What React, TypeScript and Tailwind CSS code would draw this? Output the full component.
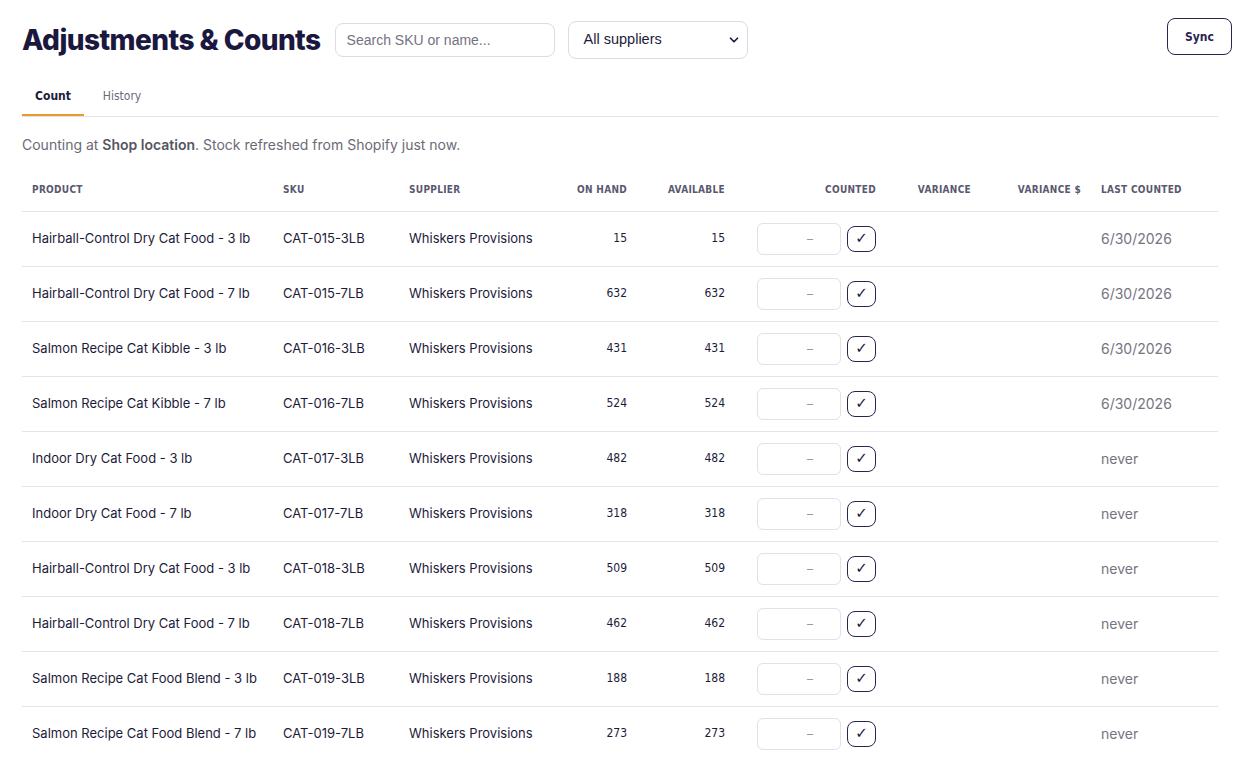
import { ChevronDown } from 'lucide-react';

type Row = {
  product: string;
  sku: string;
  supplier: string;
  onHand: number;
  available: number;
  lastCounted: string;
};

const rows: Row[] = [
  { product: 'Hairball-Control Dry Cat Food - 3 lb', sku: 'CAT-015-3LB', supplier: 'Whiskers Provisions', onHand: 15, available: 15, lastCounted: '6/30/2026' },
  { product: 'Hairball-Control Dry Cat Food - 7 lb', sku: 'CAT-015-7LB', supplier: 'Whiskers Provisions', onHand: 632, available: 632, lastCounted: '6/30/2026' },
  { product: 'Salmon Recipe Cat Kibble - 3 lb', sku: 'CAT-016-3LB', supplier: 'Whiskers Provisions', onHand: 431, available: 431, lastCounted: '6/30/2026' },
  { product: 'Salmon Recipe Cat Kibble - 7 lb', sku: 'CAT-016-7LB', supplier: 'Whiskers Provisions', onHand: 524, available: 524, lastCounted: '6/30/2026' },
  { product: 'Indoor Dry Cat Food - 3 lb', sku: 'CAT-017-3LB', supplier: 'Whiskers Provisions', onHand: 482, available: 482, lastCounted: 'never' },
  { product: 'Indoor Dry Cat Food - 7 lb', sku: 'CAT-017-7LB', supplier: 'Whiskers Provisions', onHand: 318, available: 318, lastCounted: 'never' },
  { product: 'Hairball-Control Dry Cat Food - 3 lb', sku: 'CAT-018-3LB', supplier: 'Whiskers Provisions', onHand: 509, available: 509, lastCounted: 'never' },
  { product: 'Hairball-Control Dry Cat Food - 7 lb', sku: 'CAT-018-7LB', supplier: 'Whiskers Provisions', onHand: 462, available: 462, lastCounted: 'never' },
  { product: 'Salmon Recipe Cat Food Blend - 3 lb', sku: 'CAT-019-3LB', supplier: 'Whiskers Provisions', onHand: 188, available: 188, lastCounted: 'never' },
  { product: 'Salmon Recipe Cat Food Blend - 7 lb', sku: 'CAT-019-7LB', supplier: 'Whiskers Provisions', onHand: 273, available: 273, lastCounted: 'never' },
];

const inter = "font-['Inter',sans-serif]";
const narrow = "font-['DejaVu_Sans_Condensed','Liberation_Sans_Narrow',sans-serif]";

const th = `${narrow} py-0 h-[43px] px-[10px] text-[10px] font-semibold uppercase tracking-[0.03em] text-[#5a5870]`;

export default function App() {
  return (
    <div className={`${inter} min-h-screen bg-white pl-[22px] pr-[20px] pt-[18px] text-[#1d1b3a]`}>
      <div className="mr-[-14px] flex items-start justify-between">
        <div className="flex items-center gap-[13px] pt-[2px]">
          <h1 className="text-[28px] font-extrabold leading-[40px] tracking-[-0.02em] text-[#1b1840]">
            Adjustments &amp; Counts
          </h1>
          <input
            placeholder="Search SKU or name..."
            className="ml-[1px] h-[34px] w-[220px] rounded-lg border border-[#dcdce2] px-[11px] font-['Liberation_Sans',sans-serif] text-[14px] placeholder:text-[#74727f] outline-none"
          />
          <div className="relative flex h-[38px] w-[180px] items-center rounded-lg border border-[#dcdce2] px-[15px] font-['Liberation_Sans',sans-serif] text-[14.5px] text-[#1d1b3a]">
            All suppliers
            <ChevronDown className="absolute right-[6px] h-[14px] w-[14px] stroke-[3]" />
          </div>
        </div>
        <button className={`${narrow} h-[37px] w-[65px] rounded-lg border border-[#2a2550] text-[12px] font-semibold text-[#2a2550]`}>
          Sync
        </button>
      </div>

      <div className="mt-[27px] flex border-b border-[#e4e4e8]">
        <div className={`${narrow} w-[62px] border-b-2 border-[#ec9a2a] pb-[9px] text-center text-[12px] font-semibold text-[#1d1b3a]`}>
          Count
        </div>
        <div className={`${narrow} w-[76px] pb-[9px] text-center text-[12px] text-[#6c6a7d]`}>
          History
        </div>
      </div>

      <p className="mt-[17px] text-[14px] text-[#6b6a75]">
        Counting at <span className="font-semibold text-[#56555f]">Shop location</span>. Stock refreshed from Shopify just now.
      </p>

      <table className="mt-[13px] w-full table-fixed border-collapse">
        <colgroup>
          <col className="w-[251px]" />
          <col className="w-[126px]" />
          <col className="w-[156px]" />
          <col className="w-[82px]" />
          <col className="w-[98px]" />
          <col className="w-[151px]" />
          <col className="w-[95px]" />
          <col className="w-[110px]" />
          <col />
        </colgroup>
        <thead>
          <tr className="border-b border-[#e4e4e8]">
            <th className={`${th} text-left`}>Product</th>
            <th className={`${th} text-left`}>SKU</th>
            <th className={`${th} text-left`}>Supplier</th>
            <th className={`${th} text-right`}>On hand</th>
            <th className={`${th} text-right`}>Available</th>
            <th className={`${th} text-right`}>Counted</th>
            <th className={`${th} text-right`}>Variance</th>
            <th className={`${th} text-right`}>Variance $</th>
            <th className={`${th} text-left`}>Last counted</th>
          </tr>
        </thead>
        <tbody>
          {rows.map((r) => (
            <tr key={r.sku} className="h-[55px] border-b border-[#e4e4e8] last:border-b-0">
              <td className="px-[10px] text-[13px] text-[#1d1b3a]">{r.product}</td>
              <td className="px-[10px] text-[13px] text-[#1d1b3a]">{r.sku}</td>
              <td className="px-[10px] text-[13px] text-[#1d1b3a]">{r.supplier}</td>
              <td className={`${narrow} px-[10px] pb-[2px] text-right text-[12px] text-[#1d1b3a]`}>{r.onHand}</td>
              <td className={`${narrow} px-[10px] pb-[2px] text-right text-[12px] text-[#1d1b3a]`}>{r.available}</td>
              <td className="px-[10px]">
                <div className="flex items-center justify-end gap-[6px]">
                  <div className="flex h-[32px] w-[84px] items-center justify-end rounded-md border border-[#e1e1e6] pr-[27px] text-[12px] text-[#9a98a6]">
                    –
                  </div>
                  <button className="flex h-[26px] w-[29px] items-center justify-center rounded-lg border border-[#2a2550] font-['DejaVu_Sans',sans-serif] text-[15px] font-bold leading-none text-[#1b1840]">
                    ✓
                  </button>
                </div>
              </td>
              <td className="px-[10px]"></td>
              <td className="px-[10px]"></td>
              <td className="px-[10px] text-[14px] text-[#76747f]">{r.lastCounted}</td>
            </tr>
          ))}
        </tbody>
      </table>
    </div>
  );
}
